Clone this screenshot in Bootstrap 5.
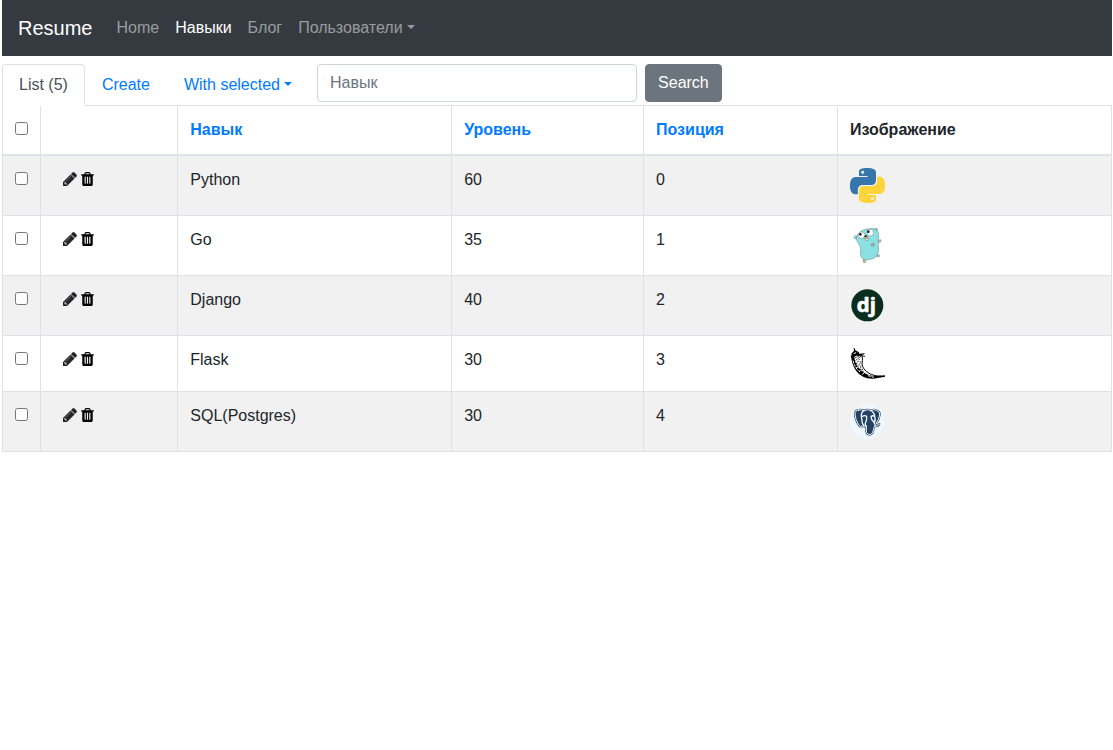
<!DOCTYPE html>
<html lang="ru">
<head>
<meta charset="utf-8">
<meta name="viewport" content="width=device-width, initial-scale=1">
<title>Навыки - Resume</title>
<link href="https://cdn.jsdelivr.net/npm/bootstrap@5.3.0/dist/css/bootstrap.min.css" rel="stylesheet">
<style>
  body { font-family: "Liberation Sans", Arial, sans-serif; font-size: 16px; line-height: 24px; color: #212529; background: #fff; }
  .page { padding: 0 1px 0 2px; }
  a { color: #007bff; text-decoration: none; }
  .topbar { background: #343a40; --bs-navbar-color: rgba(255,255,255,.5); --bs-navbar-active-color: #fff; --bs-navbar-brand-font-size: 20px; }
  .nav-tabs { --bs-nav-tabs-border-radius: 4px; --bs-nav-link-color: #007bff; --bs-nav-tabs-link-active-color: #495057; --bs-nav-tabs-border-color: #dee2e6; }
  .search-box { width: 320px; border-color: #ced4da; border-radius: 4px; }
  .search-box::placeholder { color: #6c757d; }
  .btn-secondary { --bs-btn-bg: #6c757d; --bs-btn-border-color: #6c757d; --bs-btn-border-radius: 4px; }
  .skills { table-layout: fixed; --bs-table-border-color: #dee2e6; --bs-table-striped-bg: #f1f1f1; --bs-table-color: #212529; --bs-table-striped-color: #212529; }
  .skills > * > tr > * { padding: 12px; vertical-align: top; }
  .skills > thead > tr { border-top-width: 0; border-bottom-width: 2px; }
  .skills > tbody { border-top: 0; }
  .skills input { display: block; margin: 4px 0 0; width: 13px; height: 13px; }
  .col-check { width: 38px; }
  .col-actions { width: 12.38%; }
  .col-name { width: 24.7%; }
  .col-level { width: 17.3%; }
  .col-pos { width: 17.48%; }
  .actions { padding-left: 10px; height: 22px; }
  .actions a, .actions button { display: block; line-height: 0; color: #212529; }
  .actions button { color: #000; background: none; border: 0; padding: 0; }
  .skill-logo { display: block; width: 35px; height: 35px; }
  .skill-logo.wide { height: 31px; }
</style>
</head>
<body>
<svg width="0" height="0" class="d-none" aria-hidden="true">
  <symbol id="pencil" viewBox="128 128 1536 1536"><path fill="currentColor" stroke="currentColor" stroke-width="40" d="M491 1536l91-91-235-235-91 91v107h128v128h107zm523-928q0-22-22-22-10 0-17 7l-542 542q-7 7-7 17 0 22 22 22 10 0 17-7l542-542q7-7 7-17zm-54-192l416 416-832 832h-416v-416l832-832zm683 96q0 53-37 90l-166 166-416-416 166-165q36-38 90-38 53 0 91 38l235 234q37 39 37 91z"/></symbol>
  <symbol id="trash" viewBox="192 128 1408 1536"><path fill="currentColor" d="M704 1376v-704q0-14-9-23t-23-9h-64q-14 0-23 9t-9 23v704q0 14 9 23t23 9h64q14 0 23-9t9-23zm256 0v-704q0-14-9-23t-23-9h-64q-14 0-23 9t-9 23v704q0 14 9 23t23 9h64q14 0 23-9t9-23zm256 0v-704q0-14-9-23t-23-9h-64q-14 0-23 9t-9 23v704q0 14 9 23t23 9h64q14 0 23-9t9-23zm-544-992h448l-48-117q-7-9-17-11h-317q-10 2-17 11zm928 32v64q0 14-9 23t-23 9h-96v948q0 83-47 143.500t-113 60.500h-832q-66 0-113-58.500t-47-141.500v-952h-96q-14 0-23-9t-9-23v-64q0-14 9-23t23-9h309l70-167q15-37 54-63t79-26h320q40 0 79 26t54 63l70 167h309q14 0 23 9t9 23z"/></symbol>
  <symbol id="snake" viewBox="0 0 24 24"><path fill="currentColor" d="M14.25.18l.9.2.73.26.59.3.45.32.34.34.25.34.16.33.1.3.04.26.02.2-.01.13V8.500l-.05.63-.13.55-.21.46-.26.38-.3.31-.33.25-.35.19-.35.14-.33.1-.3.07-.26.04-.21.02H8.770l-.69.05-.59.14-.5.22-.41.27-.33.32-.27.35-.2.36-.15.37-.1.35-.07.32-.04.27-.02.21v3.060H3.170l-.21-.03-.28-.07-.32-.12-.35-.18-.36-.26-.36-.36-.35-.46-.32-.59-.28-.73-.21-.88-.14-1.050-.05-1.230.06-1.220.16-1.040.24-.87.32-.71.36-.57.4-.44.42-.33.42-.24.4-.16.36-.1.32-.05.24-.01h.16l.06.01h8.160v-.83H6.180l-.01-2.750-.02-.37.05-.34.11-.31.17-.28.25-.26.31-.23.38-.2.44-.18.51-.15.58-.12.64-.1.71-.06.77-.04.84-.02 1.270.05zm-6.300 1.980l-.23.33-.08.41.08.41.23.34.33.22.41.09.41-.09.33-.22.23-.34.08-.41-.08-.41-.23-.33-.33-.22-.41-.09-.41.09z"/></symbol>
</svg>

<div class="page">
  <nav class="navbar navbar-expand topbar px-3 py-2 mb-2">
    <a class="navbar-brand text-white" href="#">Resume</a>
    <ul class="navbar-nav">
      <li class="nav-item"><a class="nav-link" href="#">Home</a></li>
      <li class="nav-item"><a class="nav-link active" href="#" aria-current="page">Навыки</a></li>
      <li class="nav-item"><a class="nav-link" href="#">Блог</a></li>
      <li class="nav-item dropdown">
        <a class="nav-link dropdown-toggle" href="#" role="button" data-bs-toggle="dropdown" aria-expanded="false">Пользователи</a>
        <ul class="dropdown-menu"></ul>
      </li>
    </ul>
  </nav>

  <ul class="nav nav-tabs">
    <li class="nav-item"><a class="nav-link active" href="#">List (5)</a></li>
    <li class="nav-item"><a class="nav-link" href="#">Create</a></li>
    <li class="nav-item dropdown">
      <a class="nav-link dropdown-toggle" href="#" role="button" data-bs-toggle="dropdown" aria-expanded="false">With selected</a>
      <ul class="dropdown-menu"></ul>
    </li>
    <li class="nav-item ms-2">
      <form class="d-flex gap-2" role="search">
        <input class="form-control search-box" type="text" name="search" placeholder="Навык" aria-label="Навык">
        <button class="btn btn-secondary" type="submit">Search</button>
      </form>
    </li>
  </ul>

  <table class="table table-striped table-bordered skills mb-0">
    <colgroup><col class="col-check"><col class="col-actions"><col class="col-name"><col class="col-level"><col class="col-pos"><col></colgroup>
    <thead>
      <tr>
        <th><input type="checkbox" aria-label="Select all records"></th>
        <th></th>
        <th><a href="#">Навык</a></th>
        <th><a href="#">Уровень</a></th>
        <th><a href="#">Позиция</a></th>
        <th>Изображение</th>
      </tr>
    </thead>
    <tbody>
      <tr>
        <td><input type="checkbox" aria-label="Python"></td>
        <td><div class="actions d-flex align-items-center gap-1"><a href="#" aria-label="Edit"><svg width="14" height="14"><use href="#pencil"/></svg></a><button type="button" aria-label="Delete"><svg width="13" height="14"><use href="#trash"/></svg></button></div></td>
        <td>Python</td><td>60</td><td>0</td>
        <td><svg class="skill-logo" viewBox="0 0 24 24">
          <use href="#snake" color="#3776ab"/>
          <use href="#snake" color="#ffd43b" transform="rotate(180 12 12)"/>
        </svg></td>
      </tr>
      <tr>
        <td><input type="checkbox" aria-label="Go"></td>
        <td><div class="actions d-flex align-items-center gap-1"><a href="#" aria-label="Edit"><svg width="14" height="14"><use href="#pencil"/></svg></a><button type="button" aria-label="Delete"><svg width="13" height="14"><use href="#trash"/></svg></button></div></td>
        <td>Go</td><td>35</td><td>1</td>
        <td><svg class="skill-logo" viewBox="30 24 105 105">
          <g stroke="#5f7f80" stroke-width="1.500">
            <circle cx="47" cy="52" r="5" fill="#8fdde0"/><circle cx="108" cy="30" r="5" fill="#8fdde0"/>
            <path fill="#d8bfa0" d="M113 61l9-2 1 6-8 3zM110 101l9 5-2 5-9-3zM69 119l2 9 6-1v-7z"/>
            <path fill="#8be0e3" d="M50 49C57 33 73 27 90 26c15-2 25 6 26 17 0 12-2 20-1 31 1 18 2 32-13 40-12 6-25 8-34 2-9-7-6-18-6-30-1-15-17-22-12-37z"/>
            <circle cx="65" cy="46" r="10" fill="#fff"/><circle cx="91" cy="38" r="10" fill="#fff"/>
            <path fill="#d8bfa0" d="M71 51q6-6 13-2l2 6q-6 3-13 1z"/>
            <path fill="#f6f6ef" d="M76 57l7-2 2 6-7 1z"/>
            <path fill="#b7a998" d="M94 72l7-2 3 5-5 4-6-2z"/>
          </g>
          <circle cx="61" cy="43" r="4" fill="#222"/><circle cx="85" cy="35" r="4" fill="#222"/><ellipse cx="77" cy="49" rx="4" ry="3" fill="#222"/>
        </svg></td>
      </tr>
      <tr>
        <td><input type="checkbox" aria-label="Django"></td>
        <td><div class="actions d-flex align-items-center gap-1"><a href="#" aria-label="Edit"><svg width="14" height="14"><use href="#pencil"/></svg></a><button type="button" aria-label="Delete"><svg width="13" height="14"><use href="#trash"/></svg></button></div></td>
        <td>Django</td><td>40</td><td>2</td>
        <td><svg class="skill-logo" viewBox="30 24 105 105">
          <circle cx="82" cy="76" r="48" fill="#092e20"/>
          <text x="79" y="95" text-anchor="middle" fill="#fff" stroke="#fff" stroke-width="2" font-family="Open Sans, sans-serif" font-weight="700" font-size="61">dj</text>
        </svg></td>
      </tr>
      <tr>
        <td><input type="checkbox" aria-label="Flask"></td>
        <td><div class="actions d-flex align-items-center gap-1"><a href="#" aria-label="Edit"><svg width="14" height="14"><use href="#pencil"/></svg></a><button type="button" aria-label="Delete"><svg width="13" height="14"><use href="#trash"/></svg></button></div></td>
        <td>Flask</td><td>30</td><td>3</td>
        <td><svg class="skill-logo wide" viewBox="30 24 105 93">
          <path d="M41 24l3 1 2 6 10 5 2 5 16-1-1 3-10 3 13 2-1 2-14-2-12-1-11 5-5-1-1-4 5-2-4-2 6-8 3-2z"/>
          <path d="M33 50l11-2c-2 12 4 25 12 35 12 15 27 23 48 25l31-2v4l-34 6c-22 1-43-6-56-29-7-12-10-25-12-37z"/>
          <path fill="none" stroke="#000" stroke-width="3" d="M65 45c5 14 1 20 1 27 2 17 20 32 45 36l22 2"/>
          <path fill="none" stroke="#000" stroke-width="3" stroke-dasharray="4 3" d="M46 53c5-3 11-3 16-3M47 61l15-11M49 72l9-14M54 80l9-16M62 90v-15M70 97l-5-12"/>
          <path fill="none" stroke="#fff" stroke-width="3" stroke-dasharray="8 3" d="M39 62c3 13 9 23 17 31M48 84l10-5M57 96l8-10M67 104l7-8M41 41l11-5M50 101l20 11M84 107l18 5"/>
        </svg></td>
      </tr>
      <tr>
        <td><input type="checkbox" aria-label="SQL(Postgres)"></td>
        <td><div class="actions d-flex align-items-center gap-1"><a href="#" aria-label="Edit"><svg width="14" height="14"><use href="#pencil"/></svg></a><button type="button" aria-label="Delete"><svg width="13" height="14"><use href="#trash"/></svg></button></div></td>
        <td>SQL(Postgres)</td><td>30</td><td>4</td>
        <td><svg class="skill-logo" viewBox="30 27 105 105">
          <circle cx="82" cy="79" r="52" fill="#f0f7ff"/>
          <g stroke-linejoin="round" stroke-linecap="round">
            <path id="elephant" fill="#234264" stroke="#234264" stroke-width="6" d="M56 45q9-2 16 2 10-5 20-1 10-4 18 0 11 4 9 14-2 14-11 26l10 1q-3 7-15 7-3 13-6 20-5 7-13 4-6-4-5-13v-13q-6 4-11 1-6 4-11-2-12-18-12-34 0-11 11-12z"/>
            <path fill="none" stroke="#f0f7ff" stroke-width="3" d="M56 45q9-2 16 2 10-5 20-1 10-4 18 0 11 4 9 14-2 14-11 26l10 1q-3 7-15 7-3 13-6 20-5 7-13 4-6-4-5-13v-13q-6 4-11 1-6 4-11-2-12-18-12-34 0-11 11-12z"/>
            <path fill="none" stroke="#f0f7ff" stroke-width="4" d="M72 47q-9 5-8 17l2 13q0 10 5 14M67 64q9-5 13 1 1 12-4 20-2 6 3 8M92 46q11 6 12 18-7-4-11 1 0 9 9 17l4 10M104 64q3 10 0 18"/>
          </g>
        </svg></td>
      </tr>
    </tbody>
  </table>
</div>
<script src="https://cdn.jsdelivr.net/npm/bootstrap@5.3.0/dist/js/bootstrap.bundle.min.js"></script>
</body>
</html>
